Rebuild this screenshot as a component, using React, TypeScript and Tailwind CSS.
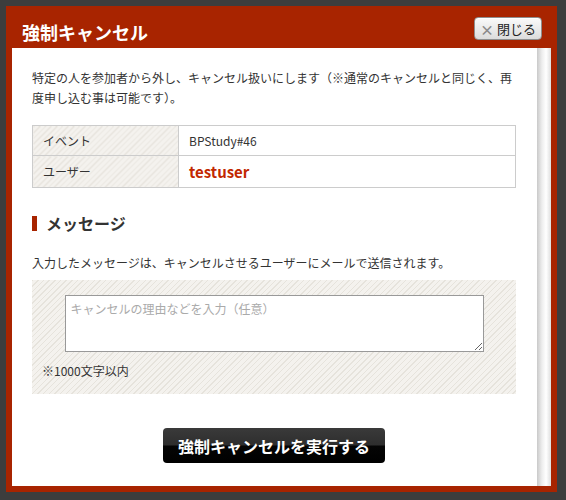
import React from "react";

const stripe =
  "bg-[repeating-linear-gradient(135deg,#e6e3dc_0px,#e6e3dc_1px,#f4f2ee_1px,#f4f2ee_4px)]";

export default function App() {
  return (
    <div className="w-[566px] h-[500px] overflow-hidden bg-[#3d3d3d] pt-[6px] pl-[6px] font-['Noto_Sans_CJK_JP',sans-serif] text-[#333]">
      <div className="w-[551px] h-[486px] bg-[#a82400] flex flex-col">
        {/* header */}
        <div className="h-[42px] shrink-0 flex items-center justify-between pl-[16px] pr-[15px] pt-[3px]">
          <div className="mt-[7px] text-white font-bold text-[18px] leading-[24px]">強制キャンセル</div>
          <button className="w-[68px] h-[23px] rounded-[4px] border border-[#8f8f8f] bg-[linear-gradient(#fafafa,#dcdcdc)] flex items-center justify-center gap-[3px] text-[13px] leading-[20px] text-[#222] shadow-[inset_0_1px_0_#fff]">
            <span className="text-[#8a8a8a] text-[14px] font-bold leading-none">×</span>
            <span>閉じる</span>
          </button>
        </div>
        {/* body */}
        <div className="flex-1 flex mx-[6px] mb-[6px] min-h-0">
          <div className="flex-1 bg-white pl-[20px] pr-[21px] pt-[20px]">
            <p className="text-[12px] leading-[20px]">
              特定の人を参加者から外し、キャンセル扱いにします（※通常のキャンセルと同じく、再度申し込む事は可能です）。
            </p>
            <table className="mt-[17px] w-[484px] border-collapse">
              <tbody>
                <tr className="h-[30px]">
                  <td className={`w-[146px] border border-[#cccccc] pl-[10px] text-[12px] leading-[20px] ${stripe}`}>イベント</td>
                  <td className="border border-[#cccccc] pl-[10px] text-[12px] leading-[20px]">BPStudy#46</td>
                </tr>
                <tr className="h-[32px]">
                  <td className={`border border-[#cccccc] pl-[10px] text-[12px] leading-[20px] ${stripe}`}>ユーザー</td>
                  <td className="border border-[#cccccc] pl-[10px] text-[15px] leading-[20px] font-bold text-[#c22800]">testuser</td>
                </tr>
              </tbody>
            </table>
            <div className="mt-[25px] flex items-center gap-[9px]">
              <span className="w-[5px] h-[15px] bg-[#a82400]" />
              <h2 className="font-bold text-[16px] leading-[20px] text-[#333]">メッセージ</h2>
            </div>
            <p className="mt-[20px] text-[12px] leading-[20px]">
              入力したメッセージは、キャンセルさせるユーザーにメールで送信されます。
            </p>
            <div className={`mt-[7px] w-[484px] h-[114px] pt-[15px] ${stripe}`}>
              <div className="flex justify-center">
                <textarea
                  className="w-[419px] h-[57px] border border-[#999] bg-white px-[5px] py-[3px] text-[12px] leading-[20px] resize-y outline-none placeholder:text-[#aaa] font-['Noto_Sans_CJK_JP',sans-serif]"
                  placeholder="キャンセルの理由などを入力（任意）"
                />
              </div>
              <p className="mt-[9px] pl-[10px] text-[12px] leading-[20px]">※1000文字以内</p>
            </div>
            <div className="mt-[34px] flex justify-center">
              <button className="w-[222px] h-[35px] rounded-[4px] bg-[linear-gradient(#3a3a3a_0%,#2e2e2e_48%,#050505_52%,#000_100%)] text-white font-bold text-[16px] leading-[20px]">
                強制キャンセルを実行する
              </button>
            </div>
          </div>
          <div className="w-[14px] bg-[linear-gradient(to_right,#c9c9c9,#ededed_35%,#ffffff_65%,#dedede)]" />
        </div>
      </div>
    </div>
  );
}
